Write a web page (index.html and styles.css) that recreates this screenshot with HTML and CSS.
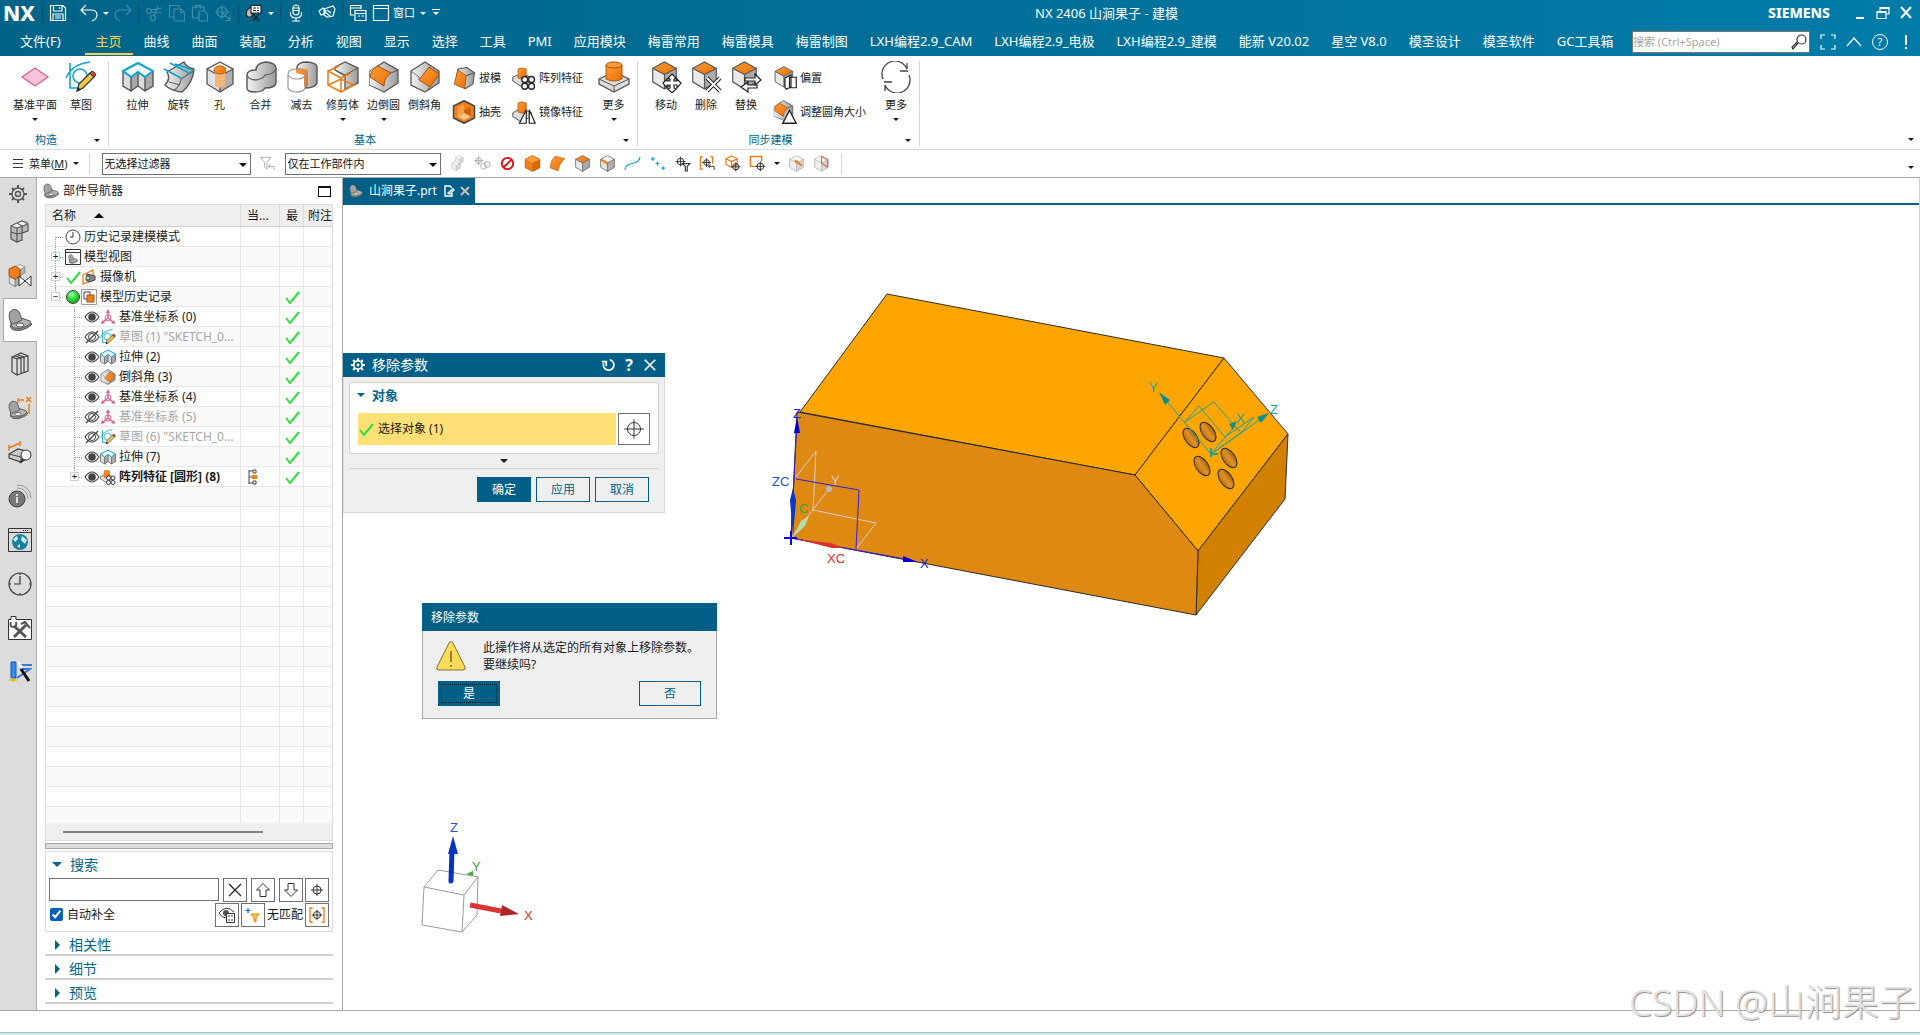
FILE: index.html
```html
<!DOCTYPE html>
<html lang="zh-CN">
<head>
    <meta charset="UTF-8">
    <meta name="viewport" content="width=device-width, initial-scale=1.0">
    <title>NX 2406 山涧果子 - 建模</title>
    <link rel="stylesheet" href="styles.css">
</head>
<body>

<!-- shared icons -->
<svg class="sprite" aria-hidden="true">
    <defs>
        <linearGradient id="gray" x1="0" x2="1"><stop offset="0" stop-color="#f4f4f4"/><stop offset="1" stop-color="#9a9a9a"/></linearGradient>
        <linearGradient id="orange" x1="0" y1="0" x2="1" y2="1"><stop offset="0" stop-color="#ff9c33"/><stop offset="1" stop-color="#e8700a"/></linearGradient>
        <linearGradient id="hole" x1="0" x2="1"><stop offset="0" stop-color="#b86f08"/><stop offset="0.5" stop-color="#e0922a"/><stop offset="1" stop-color="#a86408"/></linearGradient>
        <radialGradient id="ball" cx="0.4" cy="0.3" r="0.8"><stop offset="0" stop-color="#b6ffb6"/><stop offset="0.4" stop-color="#35e045"/><stop offset="1" stop-color="#0a9a1a"/></radialGradient>
    </defs>
    <symbol id="cube" viewBox="0 0 32 32">
        <path d="M3 8 16 15V31L3 23z" fill="#e2e2e2"/>
        <path d="M16 1 29 8 16 15 3 8z" fill="#f2f2f2"/>
        <path d="M16 15 29 8V23L16 31z" fill="#b0b0b0"/>
        <path d="M16 1 29 8V23L16 31 3 23V8zM3 8l13 7 13-7M16 15V31" fill="none" stroke="#555" stroke-width="1.3"/>
    </symbol>
    <symbol id="cubetop" viewBox="0 0 32 32">
        <path d="M3 8 16 15V31L3 23z" fill="#e9e9e9"/>
        <path d="M16 15 29 8V23L16 31z" fill="#ababab"/>
        <path d="M16 1 29 8 16 15 3 8z" fill="url(#orange)"/>
        <path d="M16 1 29 8V23L16 31 3 23V8zM3 8l13 7 13-7M16 15V31" fill="none" stroke="#555" stroke-width="1.3"/>
    </symbol>
    <symbol id="plane" viewBox="0 0 32 32">
        <path d="M16 7 29 16 16 25 3 16z" fill="#f5c4dc" stroke="#d6638c" stroke-width="1.3"/>
    </symbol>
    <symbol id="sketch" viewBox="0 0 32 32">
        <path d="M5 2V27H16M1 17Q7 3 25 1" fill="none" stroke="#12a3cc" stroke-width="1.6"/>
        <circle cx="15" cy="15" r="7" fill="none" stroke="#12a3cc" stroke-width="1.6"/>
        <path d="M12 30 14 23 25 12 29 16 18 27z" fill="#f5c842" stroke="#333" stroke-width="1.3"/>
        <path d="M25 12 29 16 31 14Q30 11 27 10z" fill="#e0413c" stroke="#333"/>
        <path d="M12 30 13 26 16 29z" fill="#222"/>
    </symbol>
    <symbol id="extrude" viewBox="0 0 32 32">
        <path d="M1 10 16 2 31 10V25L23 30 16 25 9 30 1 25z" fill="#dcdcdc"/>
        <path d="M9 16 16 12V25L9 30zM23 16 31 10V25L23 30z" fill="#a9a9a9"/>
        <path d="M1 10V25L9 30V16M9 30 16 25V12M16 25 23 30V16M23 30 31 25V10" fill="none" stroke="#555" stroke-width="1.4"/>
        <path d="M1 10 16 2 31 10 23 16 16 11 9 16z" fill="#eef8fb" stroke="#12a3cc" stroke-width="2"/>
    </symbol>
    <symbol id="revolve" viewBox="0 0 32 32">
        <path d="M4 11 21 1Q23 6 31 8 30 22 19 31 8 30 2 24 8 18 4 11z" fill="url(#gray)" stroke="#555" stroke-width="1.4"/>
        <path d="M18 18 30 10M18 18Q17 26 11 29M6 21 17 24" fill="none" stroke="#666" stroke-width="1.2"/>
        <path d="M1 8 18 17M7 2 28 13M12 3 30 9" fill="none" stroke="#12a3cc" stroke-width="1.6"/>
    </symbol>
    <symbol id="holeicon" viewBox="0 0 32 32">
        <use href="#cube"/>
        <path d="M11 10V25Q16 28 21 25V10z" fill="#f2b57c"/>
        <ellipse cx="16" cy="9" rx="6" ry="4" fill="url(#orange)" stroke="#c65a00"/>
    </symbol>
    <symbol id="unite" viewBox="0 0 32 32">
        <path d="M2 14Q2 9 11 9 11 2 21 1 31 2 31 7V22Q30 27 20 27 18 31 10 31 2 31 2 27z" fill="url(#gray)" stroke="#555" stroke-width="1.4"/>
        <path d="M2 14Q4 19 11 19 18 18 20 14 30 13 31 7" fill="none" stroke="#666" stroke-width="1.3"/>
    </symbol>
    <symbol id="subtract" viewBox="0 0 32 32">
        <path d="M11 8V6Q12 1 21 1 31 2 31 6V22Q29 27 20 27V15Q17 8 11 8z" fill="url(#gray)" stroke="#555" stroke-width="1.4"/>
        <path d="M10 8Q17 6 22 9V24Q19 27 18 24V14L10 12z" fill="url(#orange)"/>
        <path d="M2 13Q3 8 11 8 19 9 19 13 19 18 11 18 3 18 2 13V27Q4 31 11 31 18 31 19 27V13" fill="none" stroke="#999" stroke-width="1.2"/>
    </symbol>
    <symbol id="trim" viewBox="0 0 32 32">
        <path d="M8 6 18 1 31 7V22L18 28V15L8 9z" fill="url(#gray)" stroke="#555" stroke-width="1.3"/>
        <path d="M18 14 31 7M18 14 8 9" stroke="#555"/>
        <path d="M1 10 14 17V31L1 24zM1 10 12 5M14 17 24 12M1 24 14 18 27 24 14 31" fill="none" stroke="#ee7a12" stroke-width="1.5"/>
    </symbol>
    <symbol id="blend" viewBox="0 0 32 32">
        <path d="M2 10 16 1 30 9V22L16 31 2 24z" fill="url(#gray)" stroke="#555" stroke-width="1.3"/>
        <path d="M2 11Q4 8 10 5L23 12Q16 16 16 30L2 24z" fill="url(#gray)"/>
        <path d="M2 16Q3 8 10 5L23 12Q16 16 16 25z" fill="url(#orange)" stroke="#a65108"/>
        <path d="M23 12 30 9" stroke="#555"/>
    </symbol>
    <symbol id="chamfer" viewBox="0 0 32 32">
        <path d="M2 10 16 1 30 10V22L16 31 2 24z" fill="url(#gray)" stroke="#555" stroke-width="1.3"/>
        <path d="M20 6 30 13 21 26 10 19z" fill="url(#orange)" stroke="#a65108"/>
        <path d="M2 10 10 16V19M21 26 16 31" fill="none" stroke="#777"/>
    </symbol>
    <symbol id="draft" viewBox="0 0 32 32">
        <path d="M8 4 20 2 30 9 28 24 18 30 4 24z" fill="url(#gray)" stroke="#555" stroke-width="1.5"/>
        <path d="M8 5 19 13 17 30 3 24z" fill="url(#orange)" stroke="#a65108"/>
        <path d="M19 13 30 9" stroke="#555" stroke-width="1.5"/>
    </symbol>
    <symbol id="shell" viewBox="0 0 32 32">
        <path d="M16 1 30 8V24L16 31 2 24V8z" fill="#ee7d1c" stroke="#444" stroke-width="2"/>
        <path d="M7 9 16 14 25 9V22L16 27 7 22z" fill="#c9620c"/>
        <path d="M7 22 16 17 25 22 16 27z" fill="#ffc27a"/>
        <path d="M7 9V22L16 17V6z" fill="#ff9c3f"/>
    </symbol>
    <symbol id="boss" viewBox="0 0 32 32">
        <path d="M1 18 16 11 31 18V23L16 31 1 23z" fill="#ddd" stroke="#555" stroke-width="1.3"/>
        <path d="M1 18 16 25 31 18M16 25V31" fill="none" stroke="#555"/>
        <path d="M8 4V18Q16 22 24 18V4z" fill="url(#orange)" stroke="#b3560a"/>
        <ellipse cx="16" cy="4" rx="8" ry="3" fill="#ff9a3a" stroke="#b3560a"/>
    </symbol>
    <symbol id="pattern" viewBox="0 0 32 32">
        <path d="M1 15 12 10 26 15V20L12 27 1 20z" fill="#ddd" stroke="#555" stroke-width="1.3"/>
        <path d="M8 4V16Q13 19 19 16V4Q13 1 8 4z" fill="url(#orange)" stroke="#b3560a"/>
        <g fill="#fff" stroke="#222" stroke-width="1.8"><circle cx="17" cy="18" r="4"/><circle cx="26" cy="18" r="4"/><circle cx="17" cy="27" r="4"/><circle cx="26" cy="27" r="4"/></g>
    </symbol>
    <symbol id="mirror" viewBox="0 0 32 32">
        <path d="M1 17 12 11 26 17V22L12 29 1 22z" fill="#ddd" stroke="#555" stroke-width="1.3"/>
        <path d="M8 4V16Q13 19 19 16V4Q13 1 8 4z" fill="url(#orange)" stroke="#b3560a"/>
        <path d="M19 13V31H10zM23 13V31H31z" fill="#fff" stroke="#222" stroke-width="1.6"/>
    </symbol>
    <symbol id="move" viewBox="0 0 32 32">
        <use href="#cubetop" width="29" height="29"/>
        <path d="M22 13 26 17 24 18V20H27L27 18 31 22 27 27V24H24V27L26 28 22 32 18 28 20 27V24H17V27L13 22 17 18V20H20V18L18 17z" fill="#fff" stroke="#222" stroke-width="1.2"/>
    </symbol>
    <symbol id="remove" viewBox="0 0 32 32">
        <use href="#cubetop" width="29" height="29"/>
        <path d="M17 17 30 30M30 17 17 30" stroke="#222" stroke-width="4"/><path d="M17 17 30 30M30 17 17 30" stroke="#fff" stroke-width="2"/>
    </symbol>
    <symbol id="replace" viewBox="0 0 32 32">
        <use href="#cubetop" width="29" height="29"/>
        <path d="M15 17H25V13L31 19 25 24V20H15zM27 24V27H18V31L11 26 18 21V24z" fill="#fff" stroke="#222" stroke-width="1.2"/>
    </symbol>
    <symbol id="offset" viewBox="0 0 32 32">
        <use href="#cubetop" width="29" height="29"/>
        <path d="M16 16 24 12V28L18 31 16 29zM22 15H31V29H22z" fill="#fff" stroke="#222" stroke-width="1.6"/>
    </symbol>
    <symbol id="resize" viewBox="0 0 32 32">
        <use href="#blend" width="28" height="28"/>
        <path d="M22 14 31 31H13z" fill="#fff" stroke="#222" stroke-width="1.8"/>
    </symbol>
    <symbol id="cycle" viewBox="0 0 32 32">
        <path d="M3 18A13 13 0 0 1 27 8V2M28 10H20M29 14A13 13 0 0 1 5 24V30M4 21H12" fill="none" stroke="#444" stroke-width="1.3"/>
    </symbol>
    <symbol id="bracket" viewBox="0 0 24 24">
        <path d="M3 16Q1 20 6 22 12 24 19 20 25 17 23 15 21 13 13 11z" fill="#8e8e8e" stroke="#555"/>
        <path d="M3 15 13 10 22 13Q24 15 19 18 12 22 6 20 2 18 3 15z" fill="#b5b5b5" stroke="#555"/>
        <path d="M3 15Q0 8 2 4 5 0 9 2 11 3 12 6L14 12 5 16z" fill="#a2a2a2" stroke="#555"/>
        <ellipse cx="12" cy="17" rx="4" ry="2" fill="#eee" stroke="#555"/>
    </symbol>
    <symbol id="target" viewBox="0 0 16 16">
        <path d="M8 2V14M2 8H14" stroke="#333" vector-effect="non-scaling-stroke"/><circle cx="8" cy="8" r="4" fill="none" stroke="#333" vector-effect="non-scaling-stroke"/>
    </symbol>
    <symbol id="check" viewBox="0 0 16 16"><path d="M2 9 6 14 15 3" fill="none" stroke="#2be03a" stroke-width="2"/></symbol>
    <symbol id="eye" viewBox="0 0 16 16">
        <path d="M1 8Q8-2 15 8 8 18 1 8z" fill="#fff" stroke="#444" stroke-width="1.1"/><circle cx="8" cy="8" r="3.8" fill="#444"/>
    </symbol>
    <symbol id="noeye" viewBox="0 0 16 16">
        <path d="M1 8Q8-2 15 8 8 18 1 8z" fill="none" stroke="#444" stroke-width="1.1"/><circle cx="8" cy="8" r="3.5" fill="none" stroke="#444"/>
        <path d="M2 14 14 2" stroke="#444" stroke-width="1.3"/>
    </symbol>
    <symbol id="csys" viewBox="0 0 16 16">
        <path d="M8 9V3M8 9 3 13M8 9 13 13" fill="none" stroke="#d6638c" stroke-width="1.4"/>
        <circle cx="8" cy="9" r="3" fill="none" stroke="#d6638c"/>
        <path d="M8 0 10 4H6zM1 15 2 11 5 14zM15 15 14 11 11 14z" fill="#d6638c"/>
    </symbol>
    <symbol id="gear" viewBox="0 0 20 20">
        <circle cx="10" cy="10" r="6" fill="none" stroke="currentColor" stroke-width="1.4"/>
        <circle cx="10" cy="10" r="2.5" fill="none" stroke="currentColor" stroke-width="1.4"/>
        <path d="M10 1V4M10 16V19M1 10H4M16 10H19M4 4 6 6M14 14 16 16M4 16 6 14M14 6 16 4" stroke="currentColor" stroke-width="2"/>
    </symbol>
    <symbol id="boldgear" viewBox="0 0 20 20">
        <circle cx="10" cy="10" r="6" fill="none" stroke="currentColor" stroke-width="2.5"/>
        <circle cx="10" cy="10" r="2" fill="currentColor"/>
        <path d="M10 0V4M10 16V20M0 10H4M16 10H20M3 3 6 6M14 14 17 17M3 17 6 14M14 6 17 3" stroke="currentColor" stroke-width="3"/>
    </symbol>
</svg>

<header class="titlebar">
    <strong class="brand">NX</strong>
    <div class="quick"><button type="button" aria-label="保存"><svg viewBox="0 0 18 18"><path d="M1.5 1.5H14L16.5 4V16.5H1.5zM4.5 1.5V7H13V1.5M4 16V10H14V16M6 12H12M6 14H12M10.5 3V5"/></svg></button></div>
    <div class="quick">
        <button type="button" aria-label="撤消"><svg viewBox="0 0 18 18"><path d="M6 1 1 6 6 11M1 6H11Q17 6 17 11 17 15 12 17"/></svg></button>
        <i class="caret"></i>
        <button type="button" aria-label="重做" disabled><svg viewBox="0 0 18 18"><path d="M12 1 17 6 12 11M17 6H7Q1 6 1 11 1 15 6 17"/></svg></button>
    </div>
    <div class="quick">
        <button type="button" aria-label="剪切" disabled><svg viewBox="0 0 18 18"><circle cx="4" cy="7" r="2.5"/><circle cx="8" cy="14" r="2.5"/><path d="M6 8 17 9M9 12 13 2M6 6 17 4"/></svg></button>
        <button type="button" aria-label="复制" disabled><svg viewBox="0 0 18 18"><path d="M6 5H13L16.5 8V17H6zM6 13H1.5V1.5H11V5M12.5 5V8.5H16.5"/></svg></button>
        <button type="button" aria-label="粘贴" disabled><svg viewBox="0 0 18 18"><path d="M8 7H13L16.5 10V17H8zM8 14H1.5V3H13V7M4.5 4.5V1.5H10V4.5"/></svg></button>
        <button type="button" aria-label="变换" disabled><svg viewBox="0 0 18 18"><circle cx="8" cy="8" r="5"/><path d="M8 1V15M1 8H16M9 9 16 16M16 11V16.5H11"/></svg></button>
    </div>
    <div class="quick">
        <button type="button" aria-label="命令查找器"><svg viewBox="0 0 18 18"><path d="M2 6 7 2V13H3L1 11z" fill="#bbb" stroke="#222"/><path d="M6 1.5H16V9H6z" fill="#fff" stroke="#222"/><path d="M8 4H11M12 4H14M8 6.5H11M12 6.5H14M8 10 14 17M14 10 8 17" stroke="#222"/></svg></button>
        <i class="caret"></i>
    </div>
    <div class="quick"><button type="button" aria-label="语音"><svg viewBox="0 0 18 18"><rect x="6" y="1" width="6" height="10" rx="3"/><path d="M3.5 8V10Q4 14 9 14 14 14 14.5 10V8M9 14V17M5 17H13M6 4H12M6 6.5H12"/></svg></button></div>
    <div class="quick"><button type="button" aria-label="触控"><svg viewBox="0 0 18 18"><path d="M6 5 15 2 17 5 15 12 9 13 6 11zM1 7 5 4 8 7 6 10 3 11zM9 6 13 9M7 8 12 12"/></svg></button></div>
    <div class="quick last">
        <button type="button" aria-label="切换窗口"><svg viewBox="0 0 18 18"><path d="M5 11H1.5V1.5H12V5M1.5 4H12M6 6.5H17V16.5H6zM6 9.5H17M9 12H11M12.5 12H15"/></svg></button>
        <button type="button" class="with-text"><svg viewBox="0 0 18 18"><path d="M1.5 1.5H16.5V16.5H1.5zM1.5 4.5H16.5"/></svg>窗口</button>
        <i class="caret"></i><i class="caret lined"></i>
    </div>
    <div class="title">NX 2406 山涧果子 - 建模</div>
    <strong class="siemens">SIEMENS</strong>
    <div class="window-buttons">
        <button type="button" aria-label="最小化"><svg viewBox="0 0 16 16"><path d="M4 13H12" stroke-width="2"/></svg></button>
        <button type="button" aria-label="还原"><svg viewBox="0 0 16 16"><path d="M5 6V2.5H14V9H11M2 6.5H11V13.5H2zM2 7.5H11M5 3.5H14"/></svg></button>
        <button type="button" aria-label="关闭"><svg viewBox="0 0 16 16"><path d="M3 2 13 13M13 2 3 13" stroke-width="2"/></svg></button>
    </div>
</header>

<nav class="menubar">
    <a href="#" class="file">文件(F)</a>
    <a href="#" class="active">主页</a>
    <a href="#">曲线</a>
    <a href="#">曲面</a>
    <a href="#">装配</a>
    <a href="#">分析</a>
    <a href="#">视图</a>
    <a href="#">显示</a>
    <a href="#">选择</a>
    <a href="#">工具</a>
    <a href="#">PMI</a>
    <a href="#">应用模块</a>
    <a href="#">梅雷常用</a>
    <a href="#">梅雷模具</a>
    <a href="#">梅雷制图</a>
    <a href="#">LXH编程2.9_CAM</a>
    <a href="#">LXH编程2.9_电极</a>
    <a href="#">LXH编程2.9_建模</a>
    <a href="#">能新 V20.02</a>
    <a href="#">星空 V8.0</a>
    <a href="#">模圣设计</a>
    <a href="#">模圣软件</a>
    <a href="#">GC工具箱</a>
    <div class="menu-right">
        <label class="finder">
            <input type="text" placeholder="搜索 (Ctrl+Space)" aria-label="搜索命令">
            <svg viewBox="0 0 16 16"><circle cx="10.5" cy="5.5" r="4.5"/><path d="M7 9 2 15 1 13 6 8"/></svg>
        </label>
        <button type="button" aria-label="全屏"><svg viewBox="0 0 16 16"><path d="M1 5V1H5M11 1H15V5M15 11V15H11M5 15H1V11"/></svg></button>
        <button type="button" aria-label="收起功能区"><svg viewBox="0 0 16 16"><path d="M1 12 8 4 15 12"/></svg></button>
        <button type="button" class="help" aria-label="帮助">?</button>
        <button type="button" aria-label="提示"><svg viewBox="0 0 16 16"><path d="M8 1V11M8 13V15" stroke-width="2"/></svg></button>
    </div>
</nav>

<section class="ribbon">
    <div class="group">
        <div class="tools">
            <button type="button" class="big wide"><svg><use href="#plane"/></svg>基准平面<i class="caret"></i></button>
            <button type="button" class="big narrow"><svg><use href="#sketch"/></svg>草图</button>
        </div>
        <div class="group-name"><span>构造</span><i class="caret"></i></div>
    </div>
    <div class="group basic">
        <div class="tools">
            <button type="button" class="big"><svg><use href="#extrude"/></svg>拉伸</button>
            <button type="button" class="big"><svg><use href="#revolve"/></svg>旋转</button>
            <button type="button" class="big"><svg><use href="#holeicon"/></svg>孔</button>
            <button type="button" class="big"><svg><use href="#unite"/></svg>合并</button>
            <button type="button" class="big"><svg><use href="#subtract"/></svg>减去</button>
            <button type="button" class="big"><svg><use href="#trim"/></svg>修剪体<i class="caret"></i></button>
            <button type="button" class="big"><svg><use href="#blend"/></svg>边倒圆<i class="caret"></i></button>
            <button type="button" class="big"><svg><use href="#chamfer"/></svg>倒斜角</button>
            <div class="stack">
                <button type="button"><svg><use href="#draft"/></svg>拔模</button>
                <button type="button"><svg><use href="#shell"/></svg>抽壳</button>
            </div>
            <div class="stack">
                <button type="button"><svg><use href="#pattern"/></svg>阵列特征</button>
                <button type="button"><svg><use href="#mirror"/></svg>镜像特征</button>
            </div>
            <button type="button" class="big"><svg><use href="#boss"/></svg>更多<i class="caret"></i></button>
        </div>
        <div class="group-name"><span>基本</span><i class="caret"></i></div>
    </div>
    <div class="group basic sync">
        <div class="tools">
            <button type="button" class="big"><svg><use href="#move"/></svg>移动</button>
            <button type="button" class="big"><svg><use href="#remove"/></svg>删除</button>
            <button type="button" class="big"><svg><use href="#replace"/></svg>替换</button>
            <div class="stack">
                <button type="button"><svg><use href="#offset"/></svg>偏置</button>
                <button type="button"><svg><use href="#resize"/></svg>调整圆角大小</button>
            </div>
            <button type="button" class="big"><svg><use href="#cycle"/></svg>更多<i class="caret"></i></button>
        </div>
        <div class="group-name"><span>同步建模</span><i class="caret"></i></div>
    </div>
    <i class="caret options"></i>
</section>

<section class="toolbar">
    <button type="button" class="menu-button"><svg viewBox="0 0 12 12"><path d="M0 1.5H10M0 5.5H10M0 9.5H10"/></svg>菜单(<u>M</u>)<i class="caret"></i></button>
    <span class="combo filter"><select aria-label="选择过滤器"><option>无选择过滤器</option></select></span>
    <button type="button" class="tool" aria-label="重置过滤器"><svg viewBox="0 0 18 18"><path d="M1.5 2.5H12.5L8.5 8V15L6 13V8zM10 12H16V16M12 10 10 12 12 14" fill="none" stroke="#aaa"/></svg></button>
    <span class="combo scope"><select aria-label="选择范围"><option>仅在工作部件内</option></select></span>
    <div class="filters">
        <button type="button" class="tool" aria-label="装配"><svg viewBox="0 0 18 18" class="faded"><use href="#cube" x="2" y="6" width="11" height="11"/><use href="#cube" x="6" y="0" width="10" height="10"/></svg></button>
        <button type="button" class="tool" aria-label="链接"><svg viewBox="0 0 18 18"><g fill="none" stroke="#aaa"><circle cx="5" cy="6" r="3"/><path d="M5 1V11M0 6H10"/><circle cx="10" cy="12" r="3"/><circle cx="14" cy="10" r="3"/></g></svg></button>
        <button type="button" class="tool" aria-label="禁止"><svg viewBox="0 0 18 18"><circle cx="9" cy="9" r="6" fill="none" stroke="#d4151b" stroke-width="2"/><path d="M13 5 5 13" stroke="#d4151b" stroke-width="2"/></svg></button>
        <button type="button" class="tool" aria-label="体"><svg viewBox="0 0 32 32"><path d="M16 1 30 8V24L16 31 2 24V8z" fill="#ee7d1c"/><path d="M16 1 30 8 16 15 2 8z" fill="#ff9a3a"/><path d="M16 15 30 8V24L16 31z" fill="#d96a08"/><path d="M16 1 30 8V24L16 31 2 24V8z" fill="none" stroke="#a65108"/></svg></button>
        <button type="button" class="tool" aria-label="面"><svg viewBox="0 0 32 32"><path d="M12 2 30 7Q20 14 17 30L2 24Q3 10 12 2z" fill="url(#orange)" stroke="#a65108"/></svg></button>
        <button type="button" class="tool" aria-label="顶面"><svg><use href="#cubetop"/></svg></button>
        <button type="button" class="tool" aria-label="边"><svg viewBox="0 0 32 32"><use href="#cube"/><path d="M4 9 16 16" stroke="#ee7d1c" stroke-width="4"/></svg></button>
        <button type="button" class="tool" aria-label="曲线"><svg viewBox="0 0 18 18"><path d="M1 16Q1 10 9 9 16 8 17 2" fill="none" stroke="#12a3cc" stroke-width="1.3"/></svg></button>
        <button type="button" class="tool" aria-label="点"><svg viewBox="0 0 18 18"><path d="M2 4H6M4 2V6M7 9H11M9 7V11M13 14H17M15 12V16" stroke="#12a3cc" stroke-width="1.3"/></svg></button>
        <button type="button" class="tool" aria-label="捕捉过滤"><svg viewBox="0 0 18 18"><use href="#target" width="14" height="14"/><path d="M9 9H17L14 12V17H12V12z" fill="#fff" stroke="#333" stroke-width="1.2"/></svg></button>
        <button type="button" class="tool" aria-label="恢复"><svg viewBox="0 0 18 18"><path d="M4 2H1.5V15H4M12 2H14.5V9" fill="none" stroke="#ee7a12" stroke-width="1.4"/><use href="#target" x="2" y="2" width="12" height="12"/><path d="M10 12H16V16M12 10 10 12 12 14" fill="none" stroke="#333"/></svg></button>
        <button type="button" class="tool" aria-label="体选择"><svg viewBox="0 0 18 18"><path d="M8 1 14 4V10L8 13 2 10V4zM2 4 8 7 14 4M8 7V13" fill="none" stroke="#ee7a12" stroke-width="1.3"/><use href="#target" x="6" y="6" width="13" height="13"/></svg></button>
        <button type="button" class="tool" aria-label="框选"><svg viewBox="0 0 18 18"><path d="M8 12H1.5V1.5H13.5V7" fill="none" stroke="#ee7a12" stroke-width="1.5"/><use href="#target" x="5" y="5" width="14" height="14"/></svg></button>
        <i class="caret"></i>
        <button type="button" class="tool" aria-label="剖切"><svg viewBox="0 0 32 32"><use href="#cube" class="faded"/><path d="M13 10 26 20" stroke="#ee7d1c" stroke-width="4"/></svg></button>
        <button type="button" class="tool" aria-label="剖切面"><svg viewBox="0 0 32 32"><use href="#cube" class="faded"/><path d="M16 3 27 9V23L16 15z" fill="none" stroke="#e0683a" stroke-width="2"/></svg></button>
    </div>
    <i class="caret options"></i>
</section>

<main class="workspace">
    <aside class="rail">
        <button type="button" class="settings" aria-label="设置"><svg class="small"><use href="#gear"/></svg></button>
        <button type="button" aria-label="装配导航器"><svg viewBox="0 0 24 24"><path d="M3 5 12 1 20 1V10L14 14V20L8 23 3 20z" fill="#b9b9b9"/><path d="M3 6 9 8V22L3 19zM9 8 20 4V11L14 13V20L9 22M3 6 14 1 20 4M3 12 9 14 14 13V6M9 3 14 6" fill="none" stroke="#555" stroke-width="1.2"/><path d="M3 6 9 3 14 6 9 8zM9 3 14 1 20 4 14 6z" fill="#eee" stroke="#666"/></svg></button>
        <button type="button" aria-label="约束导航器"><svg viewBox="0 0 24 24"><use href="#cube" x="0" y="9" width="14" height="14"/><use href="#cube" x="6" y="0" width="12" height="12"/><path d="M1 5 7 2 12 5V12L7 15 1 12z" fill="#ee7d1c" stroke="#a65108"/><path d="M11 12V22L17 17 23 22V12L17 17z" fill="#fff" stroke="#333"/></svg></button>
        <button type="button" class="current" aria-label="部件导航器"><svg><use href="#bracket"/></svg></button>
        <button type="button" aria-label="重用库"><svg viewBox="0 0 24 24"><path d="M4 5 13 1 20 4V19L9 23 4 20z" fill="#ddd"/><path d="M4 5 9 7V23L4 20zM9 7 20 4V19L9 23M4 5 13 1 20 4M7 4 13 6V21M10 3 16 5V20" fill="none" stroke="#444" stroke-width="1.2"/></svg></button>
        <button type="button" aria-label="PMI"><svg viewBox="0 0 24 24"><use href="#bracket" y="4" width="20" height="20"/><path d="M10 2V7M11 4H16M18 1 23 6M23 1 18 6M21 8V18" stroke="#ee7a12" stroke-width="1.4" fill="none"/></svg></button>
        <button type="button" aria-label="测量"><svg viewBox="0 0 24 24"><path d="M1 14 10 9 22 12V17L13 22 1 18z" fill="#ccc" stroke="#444" stroke-width="1.2"/><path d="M1 14 13 17 22 12M13 17V22" fill="none" stroke="#444"/><path d="M1 5V11M12 1V6M1 8 12 3" stroke="#ee7a12" stroke-width="1.4"/><circle cx="18" cy="15" r="5" fill="#fff" stroke="#333"/><path d="M15 19 12 23" stroke="#333" stroke-width="2"/></svg></button>
        <button type="button" aria-label="信息"><svg viewBox="0 0 24 24"><circle cx="9" cy="15" r="8" fill="#777" stroke="#444"/><path d="M9 13V19M9 10V12" stroke="#fff" stroke-width="1.5"/><path d="M9 4Q19 4 20 15M9 1Q22 1 23 14" fill="none" stroke="#999"/></svg></button>
        <button type="button" aria-label="浏览器"><svg viewBox="0 0 24 24"><path d="M.5 .5H23.5V23.5H.5zM.5 4.5H23.5" fill="none" stroke="#333"/><path d="M15 2.5H21" stroke="#333" stroke-dasharray="1 1"/><circle cx="12" cy="14" r="8" fill="#1d7f9e"/><path d="M5 11 9 8 10 11 7 14zM14 8 19 12 17 16 13 12zM9 18 12 16 12 20z" fill="#cdeef5"/></svg></button>
        <button type="button" aria-label="历史记录"><svg viewBox="0 0 24 24"><circle cx="12" cy="12" r="11" fill="none" stroke="#444" stroke-width="1.2"/><path d="M12 4V12H6M12 1V3M12 21V23M1 12H3M21 12H23" fill="none" stroke="#333" stroke-width="1.2"/></svg></button>
        <button type="button" aria-label="工艺工具"><svg viewBox="0 0 24 24"><path d="M.5 3.5H3V.5H8V3.5H23.5V23.5H.5z" fill="#fff" stroke="#333"/><path d="M6 21 18 9M6 10 18 21" stroke="#555" stroke-width="3"/><path d="M13 8 17 6 22 12M3 6Q1 11 6 11 9 10 8 6" fill="none" stroke="#555" stroke-width="2"/></svg></button>
        <button type="button" aria-label="向导"><svg viewBox="0 0 24 24"><path d="M3 2H8V18H3z" fill="#2f8fe6" stroke="#1a52c0"/><path d="M12 5H24M12 9H22L9 18" stroke="#3f77d8" stroke-width="2" fill="none"/><path d="M13 9 21 21" stroke="#111" stroke-width="3"/><path d="M10 2 14 8" stroke="#fff" stroke-width="3"/><path d="M1 20H9M3 18 6 22" stroke="#e5c100" stroke-width="1.5"/></svg></button>
    </aside>

    <section class="navigator">
        <h2><svg><use href="#bracket"/></svg>部件导航器<button type="button" class="maximize" aria-label="最大化"></button></h2>
        <div class="tree">
            <table>
                <colgroup><col><col class="c-current"><col class="c-latest"><col class="c-note"></colgroup>
                <thead><tr><th>名称<i class="sort"></i></th><th>当...</th><th>最</th><th>附注</th></tr></thead>
                <tbody>
                    <tr><td><div class="node first"><svg viewBox="0 0 16 16"><circle cx="8" cy="8" r="7" fill="#fff" stroke="#444"/><path d="M8 3V8H5" fill="none" stroke="#333"/></svg>历史记录建模模式</div></td><td></td><td></td><td></td></tr>
                    <tr><td><div class="node"><b class="box">+</b><svg viewBox="0 0 16 16"><path d="M.5 .5H15.5V15.5H.5zM.5 3.5H15.5" fill="none" stroke="#333"/><use href="#bracket" x="3" y="5" width="10" height="10"/></svg>模型视图</div></td><td></td><td></td><td></td></tr>
                    <tr><td><div class="node"><b class="box">+</b><svg><use href="#check"/></svg><svg viewBox="0 0 16 16"><path d="M2 6 12 1V11L2 15z" fill="#fff" stroke="#ee7a12" stroke-width="1.3"/><path d="M6 5 14 7V11L8 13 5 11z" fill="#888" stroke="#444"/><circle cx="7" cy="9" r="2" fill="#ddd" stroke="#444"/></svg>摄像机</div></td><td></td><td></td><td></td></tr>
                    <tr><td><div class="node end"><b class="box">−</b><svg viewBox="0 0 16 16"><circle cx="8" cy="8" r="6.5" fill="url(#ball)" stroke="#444"/></svg><svg viewBox="0 0 16 16"><path d="M.5 .5H15.5V15.5H.5z" fill="none" stroke="#999"/><path d="M3 3H9V10H3z" fill="#fff" stroke="#444"/><path d="M6 6H13V13H6z" fill="#ee7d1c" stroke="#a65108"/></svg>模型历史记录</div></td><td></td><td><svg><use href="#check"/></svg></td><td></td></tr>
                    <tr><td><div class="node child"><svg><use href="#eye"/></svg><svg><use href="#csys"/></svg>基准坐标系 (0)</div></td><td></td><td><svg><use href="#check"/></svg></td><td></td></tr>
                    <tr class="hidden-item"><td><div class="node child"><svg><use href="#noeye"/></svg><svg><use href="#sketch"/></svg>草图 (1) "SKETCH_0...</div></td><td></td><td><svg><use href="#check"/></svg></td><td></td></tr>
                    <tr><td><div class="node child"><svg><use href="#eye"/></svg><svg><use href="#extrude"/></svg>拉伸 (2)</div></td><td></td><td><svg><use href="#check"/></svg></td><td></td></tr>
                    <tr><td><div class="node child"><svg><use href="#eye"/></svg><svg><use href="#chamfer"/></svg>倒斜角 (3)</div></td><td></td><td><svg><use href="#check"/></svg></td><td></td></tr>
                    <tr><td><div class="node child"><svg><use href="#eye"/></svg><svg><use href="#csys"/></svg>基准坐标系 (4)</div></td><td></td><td><svg><use href="#check"/></svg></td><td></td></tr>
                    <tr class="hidden-item"><td><div class="node child"><svg><use href="#noeye"/></svg><svg><use href="#csys"/></svg>基准坐标系 (5)</div></td><td></td><td><svg><use href="#check"/></svg></td><td></td></tr>
                    <tr class="hidden-item"><td><div class="node child"><svg><use href="#noeye"/></svg><svg><use href="#sketch"/></svg>草图 (6) "SKETCH_0...</div></td><td></td><td><svg><use href="#check"/></svg></td><td></td></tr>
                    <tr><td><div class="node child"><svg><use href="#eye"/></svg><svg><use href="#extrude"/></svg>拉伸 (7)</div></td><td></td><td><svg><use href="#check"/></svg></td><td></td></tr>
                    <tr class="latest"><td><div class="node child end"><b class="box">+</b><svg><use href="#eye"/></svg><svg><use href="#pattern"/></svg>阵列特征 [圆形] (8)</div></td><td><svg viewBox="0 0 16 16"><path d="M4 1V15M4 2H8M4 8H8M4 14H8" fill="none" stroke="#444"/><path d="M8 1H11V4H8zM8 12H11V15H8z" fill="#fff" stroke="#444"/><path d="M7 6H12V10H7z" fill="#ee7d1c"/></svg></td><td><svg><use href="#check"/></svg></td><td></td></tr>
                    <tr><td></td><td></td><td></td><td></td></tr>
                    <tr><td></td><td></td><td></td><td></td></tr>
                    <tr><td></td><td></td><td></td><td></td></tr>
                    <tr><td></td><td></td><td></td><td></td></tr>
                    <tr><td></td><td></td><td></td><td></td></tr>
                    <tr><td></td><td></td><td></td><td></td></tr>
                    <tr><td></td><td></td><td></td><td></td></tr>
                    <tr><td></td><td></td><td></td><td></td></tr>
                    <tr><td></td><td></td><td></td><td></td></tr>
                    <tr><td></td><td></td><td></td><td></td></tr>
                    <tr><td></td><td></td><td></td><td></td></tr>
                    <tr><td></td><td></td><td></td><td></td></tr>
                    <tr><td></td><td></td><td></td><td></td></tr>
                    <tr><td></td><td></td><td></td><td></td></tr>
                    <tr><td></td><td></td><td></td><td></td></tr>
                    <tr><td></td><td></td><td></td><td></td></tr>
                    <tr><td></td><td></td><td></td><td></td></tr>
                </tbody>
            </table>
        </div>
        <div class="hscroll"><div class="thumb"></div></div>
        <div class="splitter"></div>
        <div class="search">
            <h3><i class="down"></i>搜索</h3>
            <div class="search-row">
                <input type="text" aria-label="搜索部件">
                <button type="button" aria-label="清除"><svg viewBox="0 0 16 16"><path d="M2 2 14 14M14 2 2 14" stroke="#222" stroke-width="1.2"/></svg></button>
                <button type="button" aria-label="上一个"><svg viewBox="0 0 16 16"><path d="M8 1.5 14.5 8H11V14.5H5V8H1.5z" fill="none" stroke="#333"/></svg></button>
                <button type="button" aria-label="下一个"><svg viewBox="0 0 16 16"><path d="M8 14.5 14.5 8H11V1.5H5V8H1.5z" fill="none" stroke="#333"/></svg></button>
                <button type="button" class="close-up" aria-label="定位"><svg><use href="#target"/></svg></button>
            </div>
            <div class="search-row tight">
                <label class="auto"><input type="checkbox" checked>自动补全</label>
                <button type="button" aria-label="显示设置"><svg viewBox="0 0 16 16"><path d="M0 6Q7-3 15 5M0 6Q3 11 7 11" fill="none" stroke="#333"/><circle cx="7" cy="6" r="3" fill="#555"/><path d="M7.5 6.5H15.5V15.5H7.5z" fill="#fff" stroke="#333"/><path d="M9 9H11M12 9H14M9 13H11M12 13H14" stroke="#333"/></svg></button>
                <button type="button" aria-label="过滤"><svg viewBox="0 0 16 16"><path d="M3 1V6M.5 3.5H5.5" stroke="#1463e0" stroke-width="1.2"/><path d="M6 7H14L11 11V15L9 14V11z" fill="#ffc53d" stroke="#e08a00"/></svg></button>
                <span>无匹配</span>
                <button type="button" aria-label="居中"><svg viewBox="0 0 16 16"><path d="M3.5 1H1V15H3.5M12.5 1H15V15H12.5" fill="none" stroke="#ee7a12" stroke-width="1.3"/><use href="#target" x="1" y="1" width="14" height="14"/></svg></button>
            </div>
        </div>
        <h3 class="section"><i class="right"></i>相关性</h3>
        <h3 class="section"><i class="right"></i>细节</h3>
        <h3 class="section"><i class="right"></i>预览</h3>
    </section>

    <section class="graphics">
        <div class="doc-tabs">
            <a href="#" class="doc-tab"><svg><use href="#bracket"/></svg>山涧果子.prt<svg class="edit" viewBox="0 0 12 12"><path d="M9 8V11H2V1H7L9 3M5 8 10 4 11 5 7 9z" fill="none" stroke="#fff" stroke-width="1.4"/></svg><svg class="edit" viewBox="0 0 12 12"><path d="M2 2 10 10M10 2 2 10" stroke="#c9c2b8" stroke-width="2"/></svg></a>
        </div>
        <div class="view">
            <svg class="model" viewBox="760 280 540 350">
                <g stroke="#2b2b2b" stroke-width="1" stroke-linejoin="round">
                    <path d="M887 294 1224 358 1135 475 800 412z" fill="#ffa500"/>
                    <path d="M1224 358 1288 434 1198 551 1135 475z" fill="#ffa500"/>
                    <path d="M1288 434 1285 499 1196 615 1198 551z" fill="#d28000"/>
                    <path d="M797 412 1135 475 1198 551 1196 615 791 538z" fill="#de8a12"/>
                </g>
                <g fill="url(#hole)" stroke="#2b2b2b">
                    <ellipse cx="1191" cy="438" rx="6" ry="11" transform="rotate(-35 1191 438)"/>
                    <ellipse cx="1208" cy="432" rx="6" ry="11" transform="rotate(-35 1208 432)"/>
                    <ellipse cx="1229" cy="458" rx="6" ry="11" transform="rotate(-35 1229 458)"/>
                    <ellipse cx="1202" cy="466" rx="6" ry="11" transform="rotate(-35 1202 466)"/>
                    <ellipse cx="1226" cy="479" rx="6" ry="11" transform="rotate(-35 1226 479)"/>
                </g>
                <!-- csys on the chamfer -->
                <g fill="none" stroke="#16a3a0">
                    <path d="M1211 454 1165 399M1211 454 1262 418M1211 454 1233 428M1185 422 1199 406 1225 437 1254 417 1241 433 1211 454M1185 422 1214 402 1241 433"/>
                    <path d="M1211 448V457M1211 454H1218" stroke-width="2"/>
                </g>
                <path d="M1159 392 1170 400 1165 405zM1269 413 1261 423 1257 417zM1233 430 1237 421 1229 424z" fill="#0f8f8c"/>
                <g class="axis" fill="#16a3a0"><text x="1149" y="392">Y</text><text x="1270" y="414">Z</text><text x="1236" y="423">X</text></g>
                <!-- datum csys at the origin -->
                <path d="M796 477 816 451 813 510 876 523 856 549M791 538 829 489" fill="none" stroke="#d5ccd0"/>
                <circle cx="829" cy="489" r="3" fill="#b9b9b9"/>
                <path d="M791 538 797 420M796 479 859 490 856 549M791 538 905 559" fill="none" stroke="#3a1ae0"/>
                <path d="M797 417 800 433H794zM918 562 903 556V562z" fill="#0000cd"/>
                <path d="M796 539 831 543 843 548 832 548z" fill="#d8342c"/>
                <path d="M793 488 796 500 793 536 790 500z" fill="#0a36c4"/>
                <path d="M793 537 801 521 809 516 805 526z" fill="#b5dcae"/>
                <path d="M784 538H797M791 531V545" stroke="#0000f0" stroke-width="2"/>
                <g class="axis"><text x="793" y="418" fill="#2222dd">Z</text><text x="831" y="485" fill="#d8d0cc">Y</text><text x="920" y="568" fill="#1a1ae0">X</text><text x="772" y="486" fill="#1f4fe0">ZC</text><text x="799" y="513" fill="#3fa03a">C</text><text x="827" y="563" fill="#dc2f2f">XC</text></g>
            </svg>
            <svg class="triad" viewBox="410 815 140 130">
                <path d="M424 887 464 895 462 932 422 925zM424 887 438 870 478 877 464 895M478 877 477 915 462 932" fill="#fff" stroke="#999"/>
                <path d="M451 881 452 850" stroke="#0634c0" stroke-width="5" stroke-linecap="round"/>
                <path d="M453 836 458 854H448z" fill="#0634c0"/>
                <path d="M470 905 501 911" stroke="#dc3434" stroke-width="5"/>
                <path d="M519 914 502 905 500 916z" fill="#b02626"/>
                <path d="M466 874 473 871V876z" fill="#3fae3f"/>
                <g class="axis"><text x="450" y="832" fill="#2a50e8">Z</text><text x="472" y="871" fill="#3f9a3a">Y</text><text x="524" y="920" fill="#d63030">X</text></g>
            </svg>

            <form class="dialog params">
                <div class="dialog-title"><svg><use href="#boldgear"/></svg><span>移除参数</span>
                    <button type="button" aria-label="重置"><svg viewBox="0 0 16 16"><path d="M10 2A6 6 0 1 1 3 6M1 4H6V9" fill="none" stroke="#fff" stroke-width="2"/></svg></button>
                    <button type="button" aria-label="帮助">?</button>
                    <button type="button" aria-label="关闭"><svg viewBox="0 0 16 16"><path d="M2 2 14 14M14 2 2 14" stroke="#fff" stroke-width="2"/></svg></button>
                </div>
                <div class="dialog-body">
                    <fieldset>
                        <h4><i class="down"></i>对象</h4>
                        <div class="pick">
                            <div class="picked"><svg><use href="#check"/></svg>选择对象 (1)</div>
                            <button type="button" aria-label="选择对象"><svg><use href="#target"/></svg></button>
                        </div>
                    </fieldset>
                    <div class="more"><i class="caret"></i></div>
                    <div class="actions"><button type="submit" class="primary">确定</button><button type="button">应用</button><button type="button">取消</button></div>
                </div>
            </form>

            <form class="dialog confirm">
                <div class="dialog-title"><span>移除参数</span></div>
                <div class="message">
                    <svg viewBox="0 0 30 30"><path d="M13 2Q15-1 17 2L29 26Q30 29 27 29H3Q0 29 1 26z" fill="#fadc5a" stroke="#80703a"/><path d="M15 10V21M15 24V26" stroke="#80602a" stroke-width="1.5"/></svg>
                    <p>此操作将从选定的所有对象上移除参数。<br>要继续吗?</p>
                </div>
                <div class="answers"><button type="submit" class="primary">是</button><button type="button">否</button></div>
            </form>
        </div>
        <div class="watermark">CSDN @山涧果子</div>
    </section>
</main>

<footer class="status"></footer>

</body>
</html>
```

FILE: styles.css
```css
* {
    box-sizing: border-box;
}
body {
    margin: 0;
    height: 100vh;
    display: flex;
    flex-direction: column;
    overflow: hidden;
    font-family: "Noto Sans", "Noto Sans CJK SC", sans-serif;
    font-size: 12px;
    line-height: 16px;
    color: #1a1a1a;
    background: #fff;
}
button, input, select {
    font: inherit;
    color: inherit;
    margin: 0;
}
button {
    padding: 0;
    border: 0;
    background: none;
    cursor: pointer;
}
a {
    text-decoration: none;
}
svg {
    display: block;
    flex: none;
}
.sprite {
    position: absolute;
    width: 0;
    height: 0;
}
.caret {
    width: 0;
    height: 0;
    border: 4px solid transparent;
    border-top-color: currentColor;
    border-bottom: 0;
}

/* title bar */
.titlebar, .menubar {
    height: 28px;
    flex: none;
    display: flex;
    align-items: center;
    color: #fff;
    background: linear-gradient(90deg, #006488, #007ca8);
}
.titlebar {
    padding-bottom: 2px;
}
.brand {
    width: 42px;
    padding-left: 3px;
    font-size: 21px;
    font-weight: 800;
}
.quick {
    height: 20px;
    display: flex;
    align-items: center;
    gap: 5px;
    padding: 0 6px;
    border-left: 1px solid #004f6e;
}
.quick .caret {
    border-width: 3px;
    border-bottom: 0;
}
.quick svg {
    width: 18px;
    height: 18px;
    fill: none;
    stroke: #fff;
    stroke-width: 1.2;
}
.quick button:disabled {
    opacity: 0.25;
}
.quick .with-text {
    display: flex;
    align-items: center;
    gap: 3px;
    font-size: 11px;
}
.quick .lined {
    position: relative;
    margin-left: 2px;
}
.lined::before {
    content: "";
    position: absolute;
    left: -4px;
    top: -6px;
    width: 8px;
    height: 1px;
    background: #fff;
}
.title {
    flex: 1;
    text-align: center;
    font-size: 13px;
}
.siemens {
    font-size: 14px;
    font-weight: 800;
}
.window-buttons {
    display: flex;
    gap: 7px;
    padding: 0 6px 0 22px;
}
.window-buttons svg, .menu-right svg {
    width: 16px;
    height: 16px;
    fill: none;
    stroke: #fff;
    stroke-width: 1.2;
}

/* menu */
.menubar a {
    height: 26px;
    padding: 0 11px;
    line-height: 24px;
    font-size: 13px;
    color: #fff;
    white-space: nowrap;
}
.menubar .file {
    padding: 0 24px 0 20px;
}
.menubar .active {
    color: #ffd14f;
    border-bottom: 2px solid #ffd14f;
}
.menu-right {
    display: flex;
    align-items: center;
    gap: 10px;
    margin-left: auto;
    padding-right: 6px;
}
.finder {
    width: 178px;
    height: 22px;
    display: flex;
    align-items: center;
    padding-right: 2px;
    background: #fff;
    border: 1px solid #777;
}
.finder input {
    flex: 1;
    min-width: 0;
    padding: 0;
    border: 0;
    font-size: 11px;
    background: none;
    outline: 0;
}
.finder input::placeholder {
    color: #a6a6a6;
}
.finder svg {
    stroke: #333;
}
.help {
    width: 16px;
    height: 16px;
    border: 1px solid #fff;
    border-radius: 50%;
    font-size: 11px;
    line-height: 14px;
}

/* ribbon */
.ribbon {
    display: flex;
    flex: none;
    height: 94px;
    padding-top: 5px;
    border-bottom: 1px solid #dadada;
    font-size: 11px;
}
.group {
    height: 85px;
    display: flex;
    flex-direction: column;
    border-right: 1px solid #d6d6d6;
}
.tools {
    flex: 1;
    display: flex;
    padding: 0 10px 0 6px;
}
.basic .tools {
    padding: 0 3px 0 8px;
}
.big {
    width: 41px;
    display: flex;
    flex-direction: column;
    align-items: center;
    white-space: nowrap;
}
.sync .big {
    width: 40px;
}
.wide {
    width: 58px;
}
.narrow {
    width: 34px;
}
.big svg {
    width: 32px;
    height: 32px;
    margin-bottom: 4px;
}
.big .caret {
    margin-top: 5px;
}
.ribbon .caret {
    border-width: 3px;
    border-bottom: 0;
}
.stack {
    display: flex;
    flex-direction: column;
    padding: 0 4px 0 7px;
}
.stack + .big {
    margin-left: 6px;
}
.stack button {
    height: 34px;
    display: flex;
    align-items: center;
    gap: 3px;
    white-space: nowrap;
}
.stack svg {
    width: 24px;
    height: 24px;
}
.group-name {
    display: flex;
    align-items: center;
    height: 12px;
}
.group-name span {
    flex: 1;
    text-align: center;
    color: #006487;
}
.group-name .caret {
    margin: 0 8px 0 2px;
}
.options {
    margin: auto 6px 8px auto;
}

/* selection bar */
.toolbar {
    display: flex;
    flex: none;
    align-items: center;
    height: 28px;
    border-bottom: 1px solid #a8a8a8;
    font-size: 11px;
}
.toolbar .caret {
    border-width: 3px;
    border-bottom: 0;
}
.menu-button {
    height: 20px;
    display: flex;
    align-items: center;
    margin-right: 12px;
    padding: 0 10px 0 13px;
    border-right: 1px solid #d6d6d6;
}
.menu-button svg {
    width: 12px;
    height: 12px;
    margin-right: 4px;
    stroke: #333;
}
.menu-button .caret {
    margin-left: 5px;
}
.combo {
    position: relative;
    height: 22px;
}
.combo select {
    width: 100%;
    height: 22px;
    padding: 0 2px;
    border: 1px solid #707070;
    border-radius: 0;
    appearance: none;
    background: #fff;
    color: #111;
}
.combo::after {
    content: "";
    position: absolute;
    right: 4px;
    top: 10px;
    border: 4px solid transparent;
    border-top-color: #111;
    border-bottom: 0;
    pointer-events: none;
}
.filter {
    width: 149px;
    margin-right: 8px;
}
.scope {
    width: 156px;
    margin-left: 9px;
}
.tool svg {
    width: 17px;
    height: 17px;
}
.filters {
    display: flex;
    align-items: center;
    gap: 8px;
    height: 20px;
    padding: 0 11px 0 8px;
    border-right: 1px solid #d6d6d6;
}
.faded {
    opacity: 0.5;
}

/* workspace */
.workspace {
    flex: 1;
    min-height: 0;
    display: flex;
    border-bottom: 1px solid #a8a8a8;
}
.rail {
    width: 37px;
    flex: none;
    background: #dcdcdc;
    border-right: 1px solid #a8a8a8;
}
.rail button {
    width: 37px;
    height: 44px;
    display: flex;
    align-items: center;
    padding-left: 8px;
    color: #555;
}
.rail .settings {
    height: 32px;
}
.rail svg {
    width: 24px;
    height: 24px;
}
.rail .small {
    width: 20px;
    height: 20px;
}
.rail .current {
    margin-left: 3px;
    width: 34px;
    padding-left: 4px;
    background: #fff;
    border: 1px solid #a8a8a8;
    border-right: 0;
}
.navigator {
    width: 306px;
    flex: none;
    display: flex;
    flex-direction: column;
    padding: 0 9px 6px 8px;
    border-right: 1px solid #a8a8a8;
}
.navigator h2 {
    height: 26px;
    margin: 0;
    display: flex;
    align-items: center;
    gap: 4px;
    margin-left: -2px;
    font-size: 12px;
    font-weight: normal;
}
.navigator h2 svg {
    width: 16px;
    height: 16px;
}
.maximize {
    width: 13px;
    height: 11px;
    margin: 0 2px 0 auto;
    border: 1px solid #111;
    border-top-width: 2px;
}
.tree {
    flex: 1;
    min-height: 0;
    overflow: hidden;
    border: 1px solid #dcdcdc;
    border-bottom: 0;
}
.tree table {
    width: 100%;
    table-layout: fixed;
    border-collapse: separate;
    border-spacing: 0;
}
.c-current {
    width: 39px;
}
.c-latest {
    width: 24px;
}
.c-note {
    width: 28px;
}
.tree th {
    height: 22px;
    padding: 0 0 0 6px;
    text-align: left;
    font-weight: normal;
    white-space: nowrap;
    background: #efefef;
    border-right: 1px solid #dcdcdc;
    border-bottom: 1px solid #d0d0d0;
}
.tree td {
    height: 20px;
    padding: 0 0 0 4px;
    border-right: 1px solid #e6e6e6;
    border-bottom: 1px solid #e6e6e6;
}
.tree td:first-child {
    padding: 0;
}
.tree th:last-child, .tree td:last-child {
    padding-left: 4px;
    border-right: 0;
}
.tree tbody tr:nth-child(even) {
    background: #fafafa;
}
.tree td svg {
    width: 16px;
    height: 16px;
}
.sort {
    display: inline-block;
    margin: 0 0 2px 18px;
    border: 5px solid transparent;
    border-bottom-color: #111;
    border-top: 0;
}
.node {
    position: relative;
    height: 19px;
    display: flex;
    align-items: center;
    padding-left: 19px;
    white-space: nowrap;
}
.node svg:last-of-type {
    margin-right: 3px;
}
.node::before {
    content: "";
    position: absolute;
    left: 9px;
    top: 0;
    height: 100%;
    border-left: 1px dotted #999;
}
.node::after {
    content: "";
    position: absolute;
    left: 9px;
    top: 10px;
    width: 8px;
    border-top: 1px dotted #999;
}
.node.first::before {
    top: 10px;
}
.node.end::before {
    height: 10px;
}
.node.child {
    padding-left: 38px;
}
.node.child::before, .node.child::after {
    left: 28px;
}
.box {
    position: absolute;
    z-index: 1;
    left: 5px;
    top: 5px;
    width: 9px;
    height: 9px;
    border: 1px solid #d0d0d0;
    font-size: 10px;
    font-weight: normal;
    line-height: 7px;
    text-align: center;
    background: #fff;
}
.child .box {
    left: 24px;
}
.hidden-item {
    color: #a6a6a6;
}
.latest {
    font-weight: bold;
}
.hscroll {
    flex: none;
    height: 18px;
    padding: 8px 0 0 17px;
    background: #efefef;
    border: 1px solid #dcdcdc;
    border-top: 0;
}
.thumb {
    width: 200px;
    height: 2px;
    background: #858585;
}
.splitter {
    flex: none;
    height: 6px;
    margin: 2px 0;
    background: #dcdcdc;
    border: 1px solid #a8a8a8;
}
.search {
    flex: none;
    height: 81px;
    padding: 0 3px;
    border: 1px solid #dcdcdc;
}
.navigator h3 {
    display: flex;
    align-items: center;
    margin: 0;
    font-size: 14px;
    font-weight: normal;
    color: #006487;
}
.search h3 {
    height: 25px;
}
.down {
    margin: 0 8px 0 6px;
    border: 5px solid transparent;
    border-top-color: #006487;
    border-bottom: 0;
}
.search .down {
    margin-left: 3px;
}
.right {
    margin: 0 9px 0 10px;
    border: 5px solid transparent;
    border-left-color: #006487;
    border-right: 0;
}
.navigator .section {
    flex: none;
    height: 24px;
    padding-top: 3px;
    border-bottom: 2px solid #d0d0d0;
}
.search-row {
    display: flex;
    align-items: center;
    gap: 4px;
    height: 25px;
}
.search-row > input {
    flex: 1;
    min-width: 0;
    height: 23px;
    border: 1px solid #707070;
}
.search-row button {
    width: 24px;
    height: 24px;
    display: flex;
    align-items: center;
    justify-content: center;
    border: 1px solid #707070;
}
.search-row .close-up {
    margin-left: -2px;
}
.tight {
    gap: 2px;
}
.search-row svg {
    width: 16px;
    height: 16px;
}
.auto {
    display: flex;
    align-items: center;
    gap: 4px;
    margin-right: auto;
}
.auto input {
    width: 13px;
    height: 13px;
    margin-left: 1px;
    accent-color: #005fb8;
}

/* graphics window */
.graphics {
    flex: 1;
    min-width: 0;
    position: relative;
    display: flex;
    flex-direction: column;
    border-right: 1px solid #d0d0d0;
}
.doc-tabs {
    display: flex;
    height: 27px;
    border-bottom: 2px solid #005f87;
}
.doc-tab {
    display: flex;
    align-items: center;
    gap: 6px;
    padding: 0 6px;
    color: #fff;
    background: #005f87;
}
.doc-tab svg {
    width: 14px;
    height: 14px;
}
.doc-tab .edit {
    width: 12px;
    height: 12px;
    margin-right: -2px;
}
.view {
    flex: 1;
    position: relative;
}
.model {
    position: absolute;
    left: 417px;
    top: 75px;
    width: 540px;
    height: 350px;
}
.triad {
    position: absolute;
    left: 67px;
    top: 610px;
    width: 140px;
    height: 130px;
}
.axis {
    font-family: "Liberation Sans", sans-serif;
    font-size: 13px;
}
.watermark {
    position: absolute;
    right: 3px;
    bottom: -12px;
    font-size: 37px;
    font-weight: 300;
    line-height: 40px;
    white-space: nowrap;
    color: #e2e2e2;
    text-shadow: 1px 1px 1px #8f8f8f;
}

/* dialogs */
.dialog {
    position: absolute;
    background: #efefef;
    border: 1px solid #dcdcdc;
    border-top: 0;
}
.dialog-title {
    height: 24px;
    display: flex;
    align-items: center;
    gap: 7px;
    margin: 0 -1px;
    padding: 0 8px;
    font-size: 14px;
    color: #fff;
    background: #005f87;
}
.dialog-title span {
    flex: 1;
}
.dialog-title svg {
    width: 14px;
    height: 14px;
}
.dialog-title button {
    width: 14px;
    font-size: 16px;
    font-weight: bold;
}
.params {
    left: 0;
    top: 148px;
    width: 322px;
}
.dialog-body {
    padding: 5px;
}
fieldset {
    margin: 0;
    padding: 0 8px 8px;
    background: #fff;
    border: 1px solid #d0d0d0;
    border-radius: 2px;
}
h4 {
    display: flex;
    align-items: center;
    height: 30px;
    margin: 0;
    padding-bottom: 6px;
    font-size: 13px;
    color: #006487;
}
h4 .down {
    margin: 0 7px 0 -1px;
    border-width: 4px;
    border-bottom: 0;
}
.pick {
    display: flex;
    gap: 2px;
}
.picked {
    flex: 1;
    height: 32px;
    display: flex;
    align-items: center;
    gap: 4px;
    background: #ffe076;
}
.picked svg {
    width: 16px;
    height: 16px;
}
.pick button {
    width: 32px;
    height: 32px;
    display: flex;
    align-items: center;
    justify-content: center;
    border: 1px solid #707070;
}
.pick button svg {
    width: 26px;
    height: 26px;
}
.more {
    height: 15px;
    display: flex;
    align-items: center;
    justify-content: center;
    border-bottom: 1px solid #d0d0d0;
}
.actions {
    display: flex;
    justify-content: flex-end;
    gap: 5px;
    padding: 8px 10px 5px;
}
.actions button, .answers button {
    width: 54px;
    height: 25px;
    color: #005f87;
    border: 1px solid #005f87;
}
.actions .primary, .answers .primary {
    color: #fff;
    background: #005f87;
}
.confirm {
    left: 79px;
    top: 398px;
    width: 295px;
    border-color: #a8a8a8;
}
.confirm .dialog-title {
    height: 28px;
    padding: 1px 9px 0;
    font-size: 12px;
}
.message {
    display: flex;
    gap: 17px;
    padding: 8px 13px;
}
.message svg {
    width: 30px;
    height: 30px;
    margin-top: 2px;
}
.message p {
    margin: 0;
    line-height: 17px;
    white-space: nowrap;
}
.answers {
    display: flex;
    justify-content: space-between;
    padding: 0 15px 12px;
}
.answers button {
    width: 62px;
}
.answers .primary {
    outline: 1px dotted #001a26;
    outline-offset: -4px;
}

.status {
    flex: none;
    height: 24px;
    border-bottom: 2px solid #cdeeee;
    box-shadow: inset 0 -1px #a8b8b8;
}
```
